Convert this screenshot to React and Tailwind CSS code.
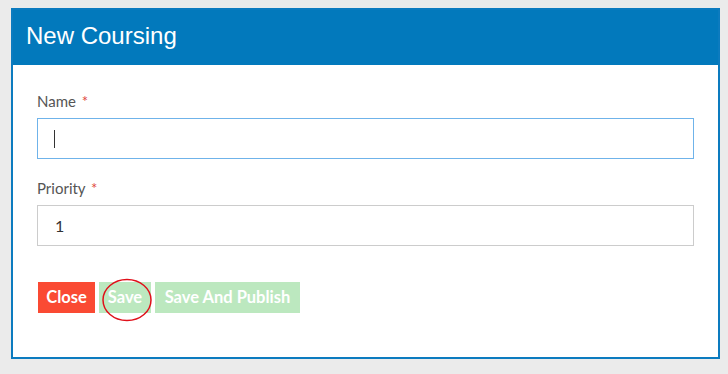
export default function App() {
  return (
    <div className="w-[728px] h-[374px] bg-[#ebebeb] pt-[8px] pl-[11px]" style={{ fontFamily: "Lato, 'Open Sans', sans-serif" }}>
      <div className="w-[709px] h-[351px] border-2 border-[#0c7bbf] bg-white flex flex-col">
        <div className="h-[55px] bg-[#0279bc] flex items-center pl-[13px] pb-[3px]">
          <span className="text-white text-[24px] leading-none" style={{ fontFamily: "'Liberation Sans', Arial, sans-serif" }}>New Coursing</span>
        </div>
        <div className="px-[24px] pt-[26px] flex flex-col">
          <label className="text-[15px] leading-[20px] text-[#555555]">
            Name <span className="text-[#e0483c] ml-[2px]">*</span>
          </label>
          <div className="mt-[7px] h-[41px] border border-[#6fb3ea] flex items-center pl-[16px]">
            <div className="w-[1px] h-[18px] bg-[#333]" />
          </div>
          <label className="mt-[19px] text-[15px] leading-[20px] text-[#555555]">
            Priority <span className="text-[#e0483c] ml-[2px]">*</span>
          </label>
          <div className="mt-[7px] h-[41px] border border-[#cccccc] flex items-center pl-[17px] text-[16px] text-[#333]">
            1
          </div>
          <div className="mt-[36px] flex gap-[4px] pl-[1px]">
            <button className="h-[31px] w-[57px] bg-[#fa4a33] text-white text-[16.5px] font-bold">Close</button>
            <div className="relative">
              <button className="h-[31px] w-[52px] bg-[#bce8bf] text-white text-[16.5px] font-bold">Save</button>
              <svg className="absolute left-[3px] top-[-3px] overflow-visible" width="52" height="43" viewBox="0 0 52 43">
                <ellipse cx="25" cy="21" rx="24" ry="20.5" fill="none" stroke="#e0101a" strokeWidth="1.5" />
              </svg>
            </div>
            <button className="h-[31px] w-[145px] bg-[#bce8bf] text-white text-[16.5px] font-bold">Save And Publish</button>
          </div>
        </div>
      </div>
    </div>
  );
}
